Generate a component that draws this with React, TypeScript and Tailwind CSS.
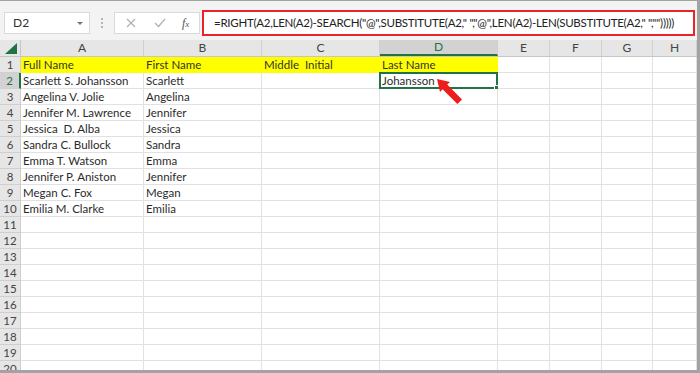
import React from "react";

const cols = [
  { key: "A", w: "w-[123px]" },
  { key: "B", w: "w-[118px]" },
  { key: "C", w: "w-[118px]" },
  { key: "D", w: "w-[118px]" },
  { key: "E", w: "w-[52px]" },
  { key: "F", w: "w-[52px]" },
  { key: "G", w: "w-[51px]" },
  { key: "H", w: "w-[44px]" },
];

const data: string[][] = [
  ["Full Name", "First Name", "Middle  Initial", "Last Name"],
  ["Scarlett S. Johansson", "Scarlett", "", "Johansson"],
  ["Angelina V. Jolie", "Angelina"],
  ["Jennifer M. Lawrence", "Jennifer"],
  ["Jessica  D. Alba", "Jessica"],
  ["Sandra C. Bullock", "Sandra"],
  ["Emma T. Watson", "Emma"],
  ["Jennifer P. Aniston", "Jennifer"],
  ["Megan C. Fox", "Megan"],
  ["Emilia M. Clarke", "Emilia"],
];

const formula =
  '=RIGHT(A2,LEN(A2)-SEARCH("@",SUBSTITUTE(A2," ","@",LEN(A2)-LEN(SUBSTITUTE(A2," ","")))))';

const App = () => {
  const rows = Array.from({ length: 20 }, (_, i) => i + 1);
  return (
    <div
      className="w-[700px] h-[373px] bg-white border-t border-r-[3px] border-b-[3px] border-[#a3a3a3] overflow-hidden flex flex-col text-[#2b2b2b]"
      style={{ fontFamily: "Lato, 'Open Sans', sans-serif" }}
    >
      {/* formula bar */}
      <div className="h-[39px] shrink-0 bg-[#f3f3f3] flex items-start pt-[10px] pl-[4px]">
        <div className="mt-[1px] w-[86px] h-[22px] bg-white border border-[#dadada] flex items-center justify-between pl-[8px] pr-[6px] text-[12px] text-[#333]">
          <span>D2</span>
          <span className="w-0 h-0 border-l-[3px] border-r-[3px] border-t-[3px] border-l-transparent border-r-transparent border-t-[#777]" />
        </div>
        <div className="w-[24px] h-[24px] flex flex-col items-center justify-center gap-[2px]">
          <span className="w-[2px] h-[2px] bg-[#b5b5b5]" />
          <span className="w-[2px] h-[2px] bg-[#b5b5b5]" />
          <span className="w-[2px] h-[2px] bg-[#b5b5b5]" />
        </div>
        <div className="mt-[1px] w-[86px] h-[22px] bg-white border border-[#dadada] flex items-center">
          <svg width="10" height="10" viewBox="0 0 10 10" className="ml-[11px]">
            <path d="M1 1 L9 9 M9 1 L1 9" stroke="#b0b0b0" strokeWidth="1.2" />
          </svg>
          <svg width="12" height="10" viewBox="0 0 12 10" className="ml-[18px]">
            <path d="M1 5 L4.5 8.5 L11 1" stroke="#b0b0b0" strokeWidth="1.2" fill="none" />
          </svg>
          <span className="ml-[16px] italic text-[12px] text-[#555]" style={{ fontFamily: "'Liberation Serif', serif" }}>
            f<span className="text-[9px]">x</span>
          </span>
        </div>
        <div className="ml-[2px] w-[493px] h-[26px] -mt-[1px] bg-white border-2 border-[#e8232a] flex items-center pl-[10px] text-[11.5px] tracking-[-0.27px] text-[#222] whitespace-nowrap overflow-hidden">
          {formula}
        </div>
      </div>

      {/* column headers */}
      <div className="h-[17px] shrink-0 flex bg-[#e6e6e6] border-b border-[#c6c6c6] text-[12px] text-[#444]">
        <div className="w-[21px] h-full border-r border-[#c6c6c6] relative">
          <svg width="12" height="11" viewBox="0 0 12 11" className="absolute right-[3px] bottom-[2px]">
            <polygon points="12,0 12,11 0,11" fill="#217346" />
          </svg>
        </div>
        {cols.map((c) => (
          <div
            key={c.key}
            className={`${c.w} h-full border-r border-[#d0d0d0] flex items-center justify-center leading-none ${
              c.key === "D" ? "bg-[#d2d2d2] text-[#217346] border-b-2 border-b-[#217346]" : ""
            }`}
          >
            {c.key}
          </div>
        ))}
      </div>

      {/* rows */}
      <div className="flex-1 flex flex-col">
        {rows.map((r) => {
          const rowData = data[r - 1] || [];
          return (
            <div key={r} className="h-[16px] shrink-0 flex text-[11.5px]">
              <div
                className={`w-[21px] h-full border-r border-b border-[#cfcfcf] flex items-center justify-center text-[11.5px] leading-none ${
                  r === 2 ? "bg-[#d2d2d2] text-[#217346] border-r-2 border-r-[#217346]" : "bg-[#e6e6e6] text-[#444]"
                }`}
              >
                {r}
              </div>
              {cols.map((c, ci) => {
                const val = rowData[ci] || "";
                const isHeader = r === 1 && ci < 4;
                const selected = r === 2 && c.key === "D";
                return (
                  <div
                    key={c.key}
                    className={`${c.w} h-full border-r border-b border-[#e1e1e1] flex items-center pl-[2px] leading-none whitespace-pre relative ${
                      isHeader ? "bg-[#ffff00] border-r-[#ffff00] border-b-[#ffff00]" : ""
                    }`}
                  >
                    {selected && (
                      <div className="absolute -left-[1px] -top-[1px] w-[119px] h-[17px] border-2 border-[#217346]">
                        <div className="absolute -right-[3px] -bottom-[3px] w-[5px] h-[5px] bg-[#217346] border border-white" />
                      </div>
                    )}
                    <span className={isHeader ? "text-[#333]" : ""}>{val}</span>
                    {selected && (
                      <svg
                        width="28"
                        height="28"
                        viewBox="0 0 28 28"
                        className="absolute left-[56px] top-[5px] z-10"
                      >
                        <polygon
                          points="1,1 14,4 11.2,6.6 26,21.4 21.4,26 6.6,11.2 4,14"
                          fill="#ee1c1c"
                        />
                      </svg>
                    )}
                  </div>
                );
              })}
            </div>
          );
        })}
      </div>
    </div>
  );
};

export default App;
